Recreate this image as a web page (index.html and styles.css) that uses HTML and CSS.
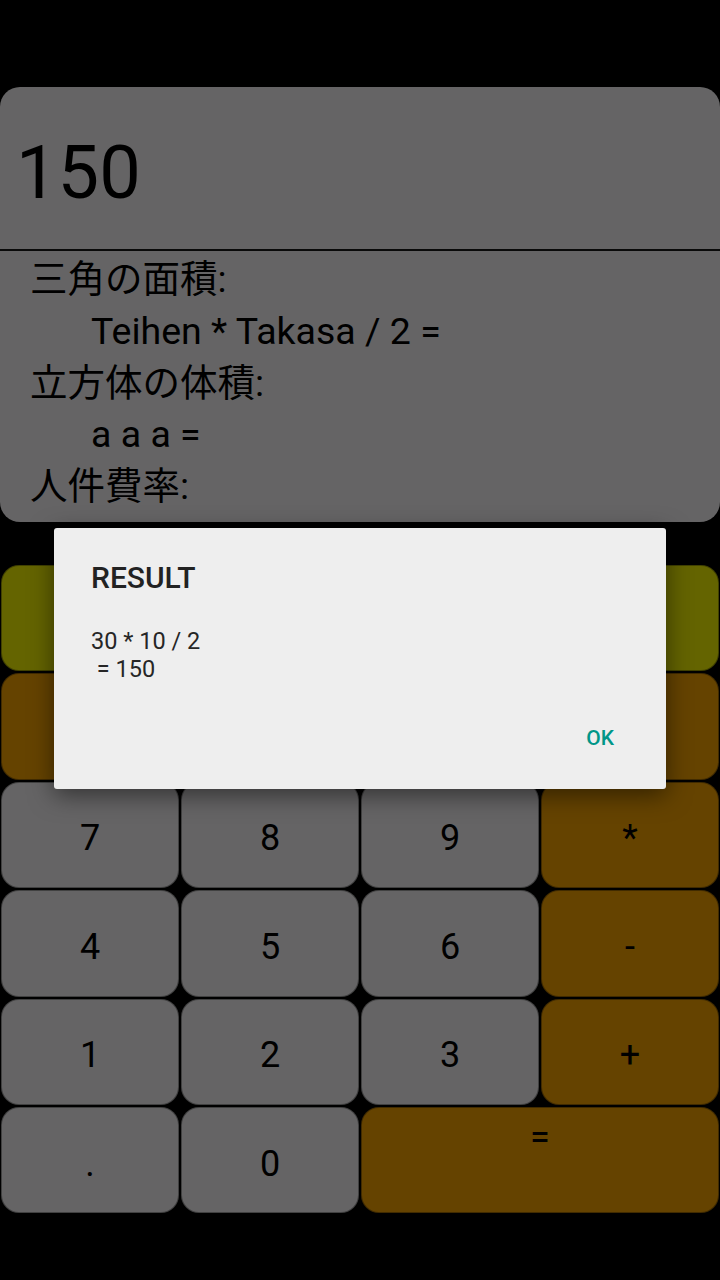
FILE: index.html
```html
<!DOCTYPE html>
<html lang="ja">
<head>
<meta charset="utf-8">
<title>Calculator</title>
<link rel="stylesheet" href="styles.css">
</head>
<body>
<div class="screen">
  <section class="panel">
    <div class="result">150</div>
    <div class="divider"></div>
    <div class="formulas">
      <div class="f-title">三角の面積:</div>
      <div class="f-expr">Teihen * Takasa / 2 =</div>
      <div class="f-title">立方体の体積:</div>
      <div class="f-expr">a a a =</div>
      <div class="f-title">人件費率:</div>
    </div>
  </section>

  <section class="keypad">
    <div class="key fn"></div>
    <div class="key fn"></div>
    <div class="key fn"></div>
    <div class="key fn"></div>
    <div class="key op"></div>
    <div class="key op"></div>
    <div class="key op"></div>
    <div class="key op"></div>
    <div class="key num">7</div>
    <div class="key num">8</div>
    <div class="key num">9</div>
    <div class="key op">*</div>
    <div class="key num">4</div>
    <div class="key num">5</div>
    <div class="key num">6</div>
    <div class="key op">-</div>
    <div class="key num">1</div>
    <div class="key num">2</div>
    <div class="key num">3</div>
    <div class="key op">+</div>
    <div class="key num">.</div>
    <div class="key num">0</div>
    <div class="key op equals">=</div>
  </section>

  <div class="dialog">
    <div class="dialog-title">RESULT</div>
    <div class="dialog-msg">30 * 10 / 2<br>&nbsp;= 150</div>
    <div class="dialog-actions"><span class="dialog-btn">OK</span></div>
  </div>
</div>
</body>
</html>
```
FILE: styles.css
```css
html, body {
  margin: 0;
  padding: 0;
  background: #000;
}
body {
  width: 720px;
  height: 1280px;
  overflow: hidden;
  font-family: Roboto, "Noto Sans CJK JP", sans-serif;
  color: #000;
}
.screen {
  position: relative;
  width: 720px;
  height: 1280px;
  padding-top: 87px;
  box-sizing: border-box;
}
.panel {
  display: flex;
  flex-direction: column;
}
.result {
  height: 162px;
  box-sizing: border-box;
  padding: 41px 0 0 16px;
  font-size: 74px;
  line-height: 90px;
  background: #656465;
  border-radius: 20px 20px 0 0;
}
.divider {
  height: 2px;
  background: #0a0a0a;
}
.formulas {
  background: #656465;
  border-radius: 0 0 20px 20px;
  padding: 3px 0 9px 30px;
  font-size: 37.5px;
  line-height: 51.8px;
  font-family: Roboto, "Noto Sans CJK JP", sans-serif;
}
.f-expr {
  padding-left: 61px;
}
.keypad {
  margin-top: 42px;
  display: grid;
  grid-template-columns: repeat(4, 180px);
  grid-template-rows: repeat(6, 108.4px);
}
.key {
  margin: 1px;
  box-sizing: border-box;
  border: 1px solid rgba(0, 0, 0, 0.35);
  border-radius: 18px;
  text-align: center;
  font-size: 36px;
  line-height: 42px;
  padding-top: 34.7px;
}
.num { background: #656465; }
.op { background: #654300; }
.fn { background: #646400; }
.equals {
  grid-column: span 2;
  padding-top: 8px;
}
.dialog {
  position: absolute;
  left: 54px;
  top: 528px;
  width: 612px;
  height: 261px;
  box-sizing: border-box;
  background: #eeeeee;
  border-radius: 3px;
  box-shadow: 0 6px 24px rgba(0, 0, 0, 0.5);
  padding: 32px 52px 0 37px;
  color: #222;
}
.dialog-title {
  font-size: 30px;
  line-height: 36px;
  font-weight: 500;
}
.dialog-msg {
  margin-top: 31px;
  font-size: 23.5px;
  line-height: 28px;
  color: #262626;
}
.dialog-actions {
  margin-top: 43px;
  display: flex;
  justify-content: flex-end;
}
.dialog-btn {
  font-size: 21px;
  line-height: 24px;
  font-weight: 500;
  color: #009688;
}
```
